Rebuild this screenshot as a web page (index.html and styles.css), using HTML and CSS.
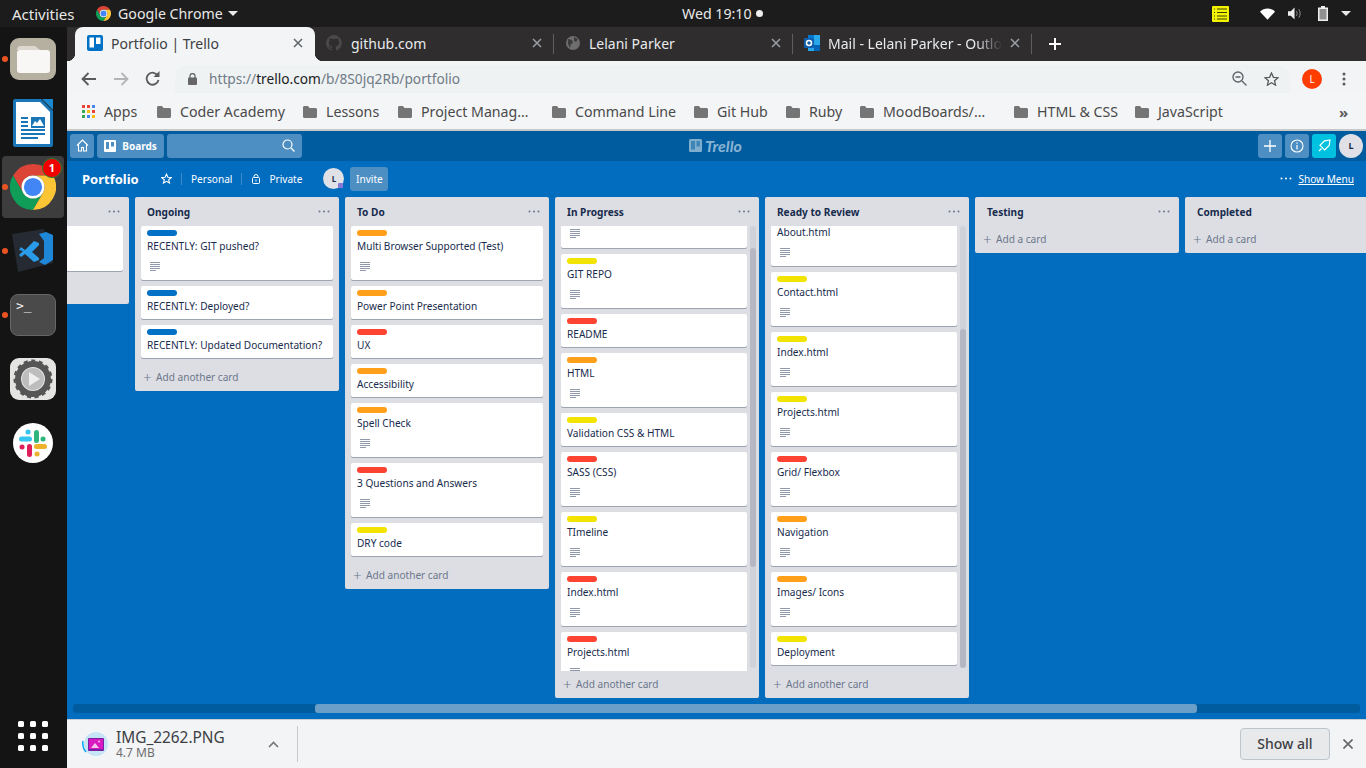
FILE: index.html
```html
<!DOCTYPE html>
<html>
  <head>
    <title>Portfolio | Trello</title>
    <link rel="stylesheet" href="styles.css">
  </head>
  <body>
    <svg class="defs" width="0" height="0">
      <symbol id="desc" viewBox="0 0 10 9"><path d="M0 .5h10M0 2.5h10M0 4.5h10M0 6.5h10M0 8.5h6" stroke="#6b778c" stroke-opacity=".75" fill="none"/></symbol>
      <symbol id="folder" viewBox="0 0 14 12"><path d="M0 1.5C0 .6.600 0 1.5 0H5l1.5 2h6c.9 0 1.5.6 1.5 1.5v7c0 .9-.6 1.5-1.5 1.5h-11C.6 12 0 11.4 0 10.5z" fill="#757575"/></symbol>
      <symbol id="dots" viewBox="0 0 12 3"><circle cx="1.5" cy="1.5" r="1"/><circle cx="6" cy="1.5" r="1"/><circle cx="10.5" cy="1.5" r="1"/></symbol>
      <symbol id="chrome" viewBox="0 0 48 48">
        <path d="M24 0A24 24 0 0 1 44.800 12H24A12 12 0 0 0 13.600 30L3.200 12A24 24 0 0 1 24 0z" fill="#db4437"/>
        <path d="M3.200 12L13.600 30A12 12 0 0 0 34.400 30L24 48A24 24 0 0 1 3.200 12z" fill="#0f9d58"/>
        <path d="M44.800 12A24 24 0 0 1 24 48L34.400 30A12 12 0 0 0 24 12z" fill="#fbc535"/>
        <circle cx="24" cy="24" r="12" fill="#fff"/>
        <circle cx="24" cy="24" r="9.500" fill="#4285f4"/>
      </symbol>
    </svg>

    <div class="topbar">
      <span class="activities">Activities</span>
      <span class="top-app"><svg class="top-logo" width="15" height="15"><use href="#chrome"/></svg>Google Chrome<i class="caret"></i></span>
      <span class="clock">Wed 19:10<i class="clock-dot"></i></span>
      <span class="tray">
        <svg class="tray-note" width="17" height="16" viewBox="0 0 17 16"><rect width="17" height="16" rx="1" fill="#f4f400"/><path d="M2 3h1M5 3h10M2 6.5h1M5 6.5h10M2 10h1M5 10h10M2 13h1M5 13h10" stroke="#3c3c00"/></svg>
        <svg class="tray-wifi" width="15" height="12" viewBox="0 0 16 12"><path d="M0 3.5C4.500-1 11.500-1 16 3.5L8 12z" fill="#fff"/></svg>
        <svg class="tray-sound" width="14" height="13" viewBox="0 0 15 13"><path d="M0 4h3l4-4v13l-4-4H0z" fill="#eee"/><path d="M9 4c1 1.500 1 3.500 0 5M11.500 2c2 2.500 2 6.500 0 9" stroke="#999" fill="none"/></svg>
        <svg class="tray-battery" width="10" height="15" viewBox="0 0 10 15"><path d="M3 0h4v1.500h3V15H0V1.500h3z" fill="#eee"/><rect x="1.5" y="3" width="7" height="10.500" fill="#1c1c1c" opacity=".45"/></svg>
        <i class="caret"></i>
      </span>
    </div>

    <div class="desktop">
      <div class="dock">
        <div class="dock-item running">
          <svg width="46" height="42" viewBox="0 0 46 42"><rect width="46" height="42" rx="9" fill="#b6b0a1"/><path d="M7 13c0-3 1-5 4-5h14l5 4H7z" fill="#dcd8cf"/><rect x="7" y="12" width="33" height="23" rx="3" fill="#f8f7f5"/></svg>
        </div>
        <div class="dock-item">
          <svg width="40" height="48" viewBox="0 0 40 48"><path d="M2 0h26l12 12v34c0 1-1 2-2 2H2c-1 0-2-1-2-2V2C0 1 1 0 2 0z" fill="#1b76b8"/><path d="M3 3h24l10 10v32H3z" fill="#fff"/><path d="M29 0l11 0v11z" fill="#1b87cf"/><path d="M8 19h7M8 23h7M8 27h7M8 31h24M8 35h24M8 39h17" stroke="#1b76b8" stroke-width="2"/><rect x="18" y="18" width="14" height="11" fill="#1b76b8"/><path d="M19 27l3-5 2 2 3-4 4 7z" fill="#fff"/></svg>
        </div>
        <div class="dock-item running active">
          <svg class="dock-chrome" width="46" height="46"><use href="#chrome"/></svg>
          <span class="badge">1</span>
        </div>
        <div class="dock-item running">
          <svg width="42" height="44" viewBox="0 0 42 44"><path d="M0 5l32-5 9 34-35 9z" fill="#252a33"/><path d="M27 5l7-2 7 3-0 25-8 5-6-3 5-4V12z" fill="#1f87d8"/><path d="M7 21l2-3 4 3 9-9 5 2v2l-7 7 7 6v2l-5 2-9-8-4 3-2-2 4-4z" fill="#2a9be8"/></svg>
        </div>
        <div class="dock-item running">
          <div class="term-icon">&gt;_</div>
        </div>
        <div class="dock-item">
          <svg width="46" height="42" viewBox="0 0 46 42"><rect width="46" height="42" rx="9" fill="#e4e4e2"/><circle cx="23" cy="21" r="15" fill="none" stroke="#555" stroke-width="6"/><circle cx="23" cy="21" r="18" fill="none" stroke="#555" stroke-width="3" stroke-dasharray="4 3.500"/><circle cx="23" cy="21" r="11" fill="#bdbdbd"/><path d="M19 14l11 7-11 7z" fill="#eee"/></svg>
        </div>
        <div class="dock-item">
          <svg width="40" height="40" viewBox="0 0 40 40"><circle cx="20" cy="20" r="20" fill="#fff"/><g fill="none" stroke-width="5" stroke-linecap="round"><path d="M8.500 16h8M15 9h.1" stroke="#36c5f0"/><path d="M23.500 9.500v8M30 16h.1" stroke="#2eb67d"/><path d="M23.500 23.500h8M24 31h.1" stroke="#ecb22e"/><path d="M16.500 23.500v8M9 24h.1" stroke="#e01e5a"/></g></svg>
        </div>
        <div class="dock-item apps-grid">
          <svg width="30" height="30" viewBox="0 0 30 30" fill="#fff"><rect width="6" height="6" rx="1.500"/><rect x="12" width="6" height="6" rx="1.500"/><rect x="24" width="6" height="6" rx="1.500"/><rect y="12" width="6" height="6" rx="1.500"/><rect x="12" y="12" width="6" height="6" rx="1.500"/><rect x="24" y="12" width="6" height="6" rx="1.500"/><rect y="24" width="6" height="6" rx="1.500"/><rect x="12" y="24" width="6" height="6" rx="1.500"/><rect x="24" y="24" width="6" height="6" rx="1.500"/></svg>
        </div>
      </div>

      <div class="chrome">
        <div class="tabs">
          <div class="tab current">
            <svg class="favicon" width="16" height="16" viewBox="0 0 16 16"><rect width="16" height="16" rx="2" fill="#0072c6"/><rect x="2.5" y="2.5" width="4.500" height="10" rx=".5" fill="#fff"/><rect x="9" y="2.5" width="4.500" height="6.500" rx=".5" fill="#fff"/></svg>
            <span class="tab-title">Portfolio | Trello</span>
            <svg class="tab-close" width="10" height="10" viewBox="0 0 10 10"><path d="M1 1l8 8M9 1l-8 8" stroke="#5f6368" stroke-width="1.500"/></svg>
          </div>
          <div class="tab">
            <svg class="favicon" width="16" height="16" viewBox="0 0 16 16"><path d="M8 0a8 8 0 0 0-2.500 15.600c.4.100.5-.2.500-.4v-1.400c-2.200.5-2.700-1-2.700-1-.4-.9-.9-1.200-.9-1.200-.7-.5.100-.5.100-.5.800.1 1.200.8 1.200.8.700 1.200 1.900.9 2.300.7.100-.5.300-.9.500-1.100-1.800-.2-3.600-.9-3.600-4 0-.9.300-1.600.8-2.100-.1-.2-.4-1 .1-2.100 0 0 .7-.2 2.200.8a7.600 7.600 0 0 1 4 0c1.500-1 2.200-.8 2.200-.8.400 1.100.2 1.900.1 2.100.5.600.8 1.300.8 2.100 0 3.100-1.900 3.700-3.700 3.900.3.300.6.800.6 1.500v2.200c0 .2.100.5.600.4A8 8 0 0 0 8 0z" fill="#4a4a4a"/></svg>
            <span class="tab-title">github.com</span>
            <svg class="tab-close" width="10" height="10" viewBox="0 0 10 10"><path d="M1 1l8 8M9 1l-8 8" stroke="#9aa0a6" stroke-width="1.500"/></svg>
          </div>
          <i class="tab-sep"></i>
          <div class="tab">
            <svg class="favicon" width="16" height="16" viewBox="0 0 16 16"><circle cx="8" cy="8" r="7" fill="#6e6e6e"/><path d="M3 4l4 1 1 3-2 1-1 4-2-4zM9 2l4 2-2 3-2-1z" fill="#3c3c3c"/></svg>
            <span class="tab-title">Lelani Parker</span>
            <svg class="tab-close" width="10" height="10" viewBox="0 0 10 10"><path d="M1 1l8 8M9 1l-8 8" stroke="#9aa0a6" stroke-width="1.500"/></svg>
          </div>
          <i class="tab-sep"></i>
          <div class="tab">
            <svg class="favicon" width="16" height="16" viewBox="0 0 16 16"><rect x="4" width="12" height="16" fill="#28a8ea"/><rect x="4" width="6" height="5" fill="#0078d4"/><rect x="10" y="10" width="6" height="6" fill="#0364b8"/><rect y="3" width="10" height="10" rx="1" fill="#0f5fb0"/><circle cx="5" cy="8" r="2.500" fill="none" stroke="#fff" stroke-width="1.500"/></svg>
            <span class="tab-title faded">Mail - Lelani Parker - Outlo</span>
            <svg class="tab-close" width="10" height="10" viewBox="0 0 10 10"><path d="M1 1l8 8M9 1l-8 8" stroke="#9aa0a6" stroke-width="1.500"/></svg>
          </div>
          <i class="tab-sep"></i>
          <svg class="new-tab" width="12" height="12" viewBox="0 0 12 12"><path d="M6 0v12M0 6h12" stroke="#fff" stroke-width="2"/></svg>
        </div>

        <div class="toolbar">
          <svg class="nav-btn" width="16" height="14" viewBox="0 0 16 14"><path d="M15 7H2M7.500 1L1.500 7l6 6" fill="none" stroke="#5a5a5a" stroke-width="1.800"/></svg>
          <svg class="nav-btn" width="16" height="14" viewBox="0 0 16 14"><path d="M1 7h13M8.500 1l6 6-6 6" fill="none" stroke="#b4b4b4" stroke-width="1.800"/></svg>
          <svg class="nav-btn" width="15" height="15" viewBox="0 0 15 15"><path d="M13 5A6 6 0 1 0 13.500 9" fill="none" stroke="#5a5a5a" stroke-width="1.800"/><path d="M14.500 0v6h-6z" fill="#5a5a5a"/></svg>
          <div class="omnibox">
            <svg width="9" height="12" viewBox="0 0 9 12"><rect y="4.500" width="9" height="7.500" rx="1" fill="#666"/><path d="M2 5V3a2.500 2.500 0 0 1 5 0v2" fill="none" stroke="#666" stroke-width="1.300"/></svg>
            <span class="url"><span class="url-dim">https://</span>trello.com<span class="url-dim">/b/8S0jq2Rb/portfolio</span></span>
            <svg class="zoom-out" width="15" height="15" viewBox="0 0 15 15"><circle cx="6" cy="6" r="5" fill="none" stroke="#5f6368" stroke-width="1.400"/><path d="M3.500 6h5M10 10l4.500 4.500" stroke="#5f6368" stroke-width="1.400"/></svg>
            <svg class="star-btn" width="15" height="14" viewBox="0 0 15 14"><path d="M7.500 1l1.900 4.300 4.600.4-3.500 3 1.100 4.500-4.100-2.400-4.100 2.400 1.100-4.500L1 5.700l4.600-.4z" fill="none" stroke="#5a5a5a" stroke-width="1.300"/></svg>
          </div>
          <span class="profile">L</span>
          <svg class="more-btn" width="4" height="14" viewBox="0 0 4 14" fill="#5a5a5a"><circle cx="2" cy="2" r="1.500"/><circle cx="2" cy="7" r="1.500"/><circle cx="2" cy="12" r="1.500"/></svg>
        </div>

        <div class="bookmarks">
          <span class="bm bm-apps">
            <svg width="13" height="13" viewBox="0 0 13 13"><rect width="3" height="3" fill="#ea4335"/><rect x="5" width="3" height="3" fill="#ea4335"/><rect x="10" width="3" height="3" fill="#4285f4"/><rect y="5" width="3" height="3" fill="#34a853"/><rect x="5" y="5" width="3" height="3" fill="#fbbc05"/><rect x="10" y="5" width="3" height="3" fill="#ea4335"/><rect y="10" width="3" height="3" fill="#34a853"/><rect x="5" y="10" width="3" height="3" fill="#4285f4"/><rect x="10" y="10" width="3" height="3" fill="#fbbc05"/></svg>
            Apps
          </span>
          <span class="bm bm-coder"><svg width="14" height="12"><use href="#folder"/></svg>Coder Academy</span>
          <span class="bm bm-lessons"><svg width="14" height="12"><use href="#folder"/></svg>Lessons</span>
          <span class="bm bm-project"><svg width="14" height="12"><use href="#folder"/></svg>Project Manag&#8230;</span>
          <span class="bm bm-command"><svg width="14" height="12"><use href="#folder"/></svg>Command Line</span>
          <span class="bm bm-git"><svg width="14" height="12"><use href="#folder"/></svg>Git Hub</span>
          <span class="bm bm-ruby"><svg width="14" height="12"><use href="#folder"/></svg>Ruby</span>
          <span class="bm bm-mood"><svg width="14" height="12"><use href="#folder"/></svg>MoodBoards/&#8230;</span>
          <span class="bm bm-html"><svg width="14" height="12"><use href="#folder"/></svg>HTML &amp; CSS</span>
          <span class="bm bm-js"><svg width="14" height="12"><use href="#folder"/></svg>JavaScript</span>
          <span class="bm-more">&#187;</span>
        </div>

        <div class="trello">
          <div class="t-header">
            <span class="t-btn t-home">
              <svg width="13" height="13" viewBox="0 0 13 13"><path d="M1 6.500L6.500 1 12 6.500M2.500 5.500V12h3V8.500h2V12h3V5.500" fill="none" stroke="#fff" stroke-width="1.100"/></svg>
            </span>
            <span class="t-btn t-boards">
              <svg width="12" height="12" viewBox="0 0 12 12"><rect width="12" height="12" rx="1" fill="#fff"/><rect x="2" y="2" width="3" height="7" fill="#4d8fc2"/><rect x="7" y="2" width="3" height="4.500" fill="#4d8fc2"/></svg>
              Boards
            </span>
            <span class="t-btn t-search">
              <svg width="13" height="13" viewBox="0 0 13 13"><circle cx="5.5" cy="5.5" r="4.500" fill="none" stroke="#fff" stroke-width="1.200"/><path d="M9 9l3.500 3.500" stroke="#fff" stroke-width="1.200"/></svg>
            </span>
            <span class="t-logo">
              <svg width="13" height="13" viewBox="0 0 13 13"><rect width="13" height="13" rx="1.500" fill="#fff" fill-opacity=".5"/><rect x="2" y="2" width="4" height="8.500" fill="#005c9f" fill-opacity=".5"/><rect x="7.5" y="2" width="3.500" height="5.500" fill="#005c9f" fill-opacity=".5"/></svg>
              Trello
            </span>
            <span class="t-btn t-square">
              <svg width="12" height="12" viewBox="0 0 12 12"><path d="M6 0v12M0 6h12" stroke="#fff" stroke-width="1.300"/></svg>
            </span>
            <span class="t-btn t-square">
              <svg width="14" height="14" viewBox="0 0 14 14"><circle cx="7" cy="7" r="6" fill="none" stroke="#fff" stroke-width="1.100"/><path d="M7 6v4.500M7 3.500v1.200" stroke="#fff" stroke-width="1.200"/></svg>
            </span>
            <span class="t-btn t-square t-rocket">
              <svg width="13" height="13" viewBox="0 0 13 13"><path d="M12 1L6.500 1.800 2 6.300l4.700 4.700L11.200 6.500zM3.500 9.500L1 12" fill="none" stroke="#fff" stroke-width="1.200"/></svg>
            </span>
            <span class="t-avatar">L</span>
          </div>

          <div class="b-header">
            <span class="b-title">Portfolio</span>
            <svg class="b-star" width="11" height="11" viewBox="0 0 15 14"><path d="M7.500 1l1.900 4.300 4.600.4-3.500 3 1.100 4.500-4.100-2.400-4.100 2.400 1.100-4.500L1 5.700l4.600-.4z" fill="none" stroke="#fff" stroke-width="1.500"/></svg>
            <i class="b-sep"></i>
            <span class="b-text">Personal</span>
            <i class="b-sep"></i>
            <svg class="b-lock" width="8" height="10" viewBox="0 0 8 10"><rect x=".5" y="3.500" width="7" height="6" rx="1" fill="none" stroke="#fff"/><path d="M2 3.500V2.500a2 2 0 0 1 4 0v1" fill="none" stroke="#fff"/><path d="M4 5.500v2" stroke="#fff"/></svg>
            <span class="b-text">Private</span>
            <span class="b-avatar">L<i class="b-avatar-mark"></i></span>
            <span class="b-invite">Invite</span>
            <svg class="b-dots" width="12" height="3" fill="#fff"><use href="#dots"/></svg>
            <span class="b-menu">Show Menu</span>
          </div>

          <div class="board">
            <div class="list">
              <div class="list-head"><h2></h2><svg width="12" height="3"><use href="#dots"/></svg></div>
              <div class="cards">
                <div class="card card-empty"></div>
              </div>
              <div class="list-foot"></div>
            </div>

            <div class="list">
              <div class="list-head"><h2>Ongoing</h2><svg width="12" height="3"><use href="#dots"/></svg></div>
              <div class="cards">
                <div class="card"><i class="label blue"></i><p>RECENTLY: GIT pushed?</p><svg class="desc" width="10" height="9"><use href="#desc"/></svg></div>
                <div class="card"><i class="label blue"></i><p>RECENTLY: Deployed?</p></div>
                <div class="card"><i class="label blue"></i><p>RECENTLY: Updated Documentation?</p></div>
              </div>
              <div class="list-foot"><span class="plus">+</span>Add another card</div>
            </div>

            <div class="list">
              <div class="list-head"><h2>To Do</h2><svg width="12" height="3"><use href="#dots"/></svg></div>
              <div class="cards">
                <div class="card"><i class="label orange"></i><p>Multi Browser Supported (Test)</p><svg class="desc" width="10" height="9"><use href="#desc"/></svg></div>
                <div class="card"><i class="label orange"></i><p>Power Point Presentation</p></div>
                <div class="card"><i class="label red"></i><p>UX</p></div>
                <div class="card"><i class="label orange"></i><p>Accessibility</p></div>
                <div class="card"><i class="label orange"></i><p>Spell Check</p><svg class="desc" width="10" height="9"><use href="#desc"/></svg></div>
                <div class="card"><i class="label red"></i><p>3 Questions and Answers</p><svg class="desc" width="10" height="9"><use href="#desc"/></svg></div>
                <div class="card"><i class="label yellow"></i><p>DRY code</p></div>
              </div>
              <div class="list-foot"><span class="plus">+</span>Add another card</div>
            </div>

            <div class="list">
              <div class="list-head"><h2>In Progress</h2><svg width="12" height="3"><use href="#dots"/></svg></div>
              <div class="scroller">
                <div class="cards scrolled">
                  <div class="card card-top"><svg class="desc" width="10" height="9"><use href="#desc"/></svg></div>
                  <div class="card"><i class="label yellow"></i><p>GIT REPO</p><svg class="desc" width="10" height="9"><use href="#desc"/></svg></div>
                  <div class="card"><i class="label red"></i><p>README</p></div>
                  <div class="card"><i class="label orange"></i><p>HTML</p><svg class="desc" width="10" height="9"><use href="#desc"/></svg></div>
                  <div class="card"><i class="label yellow"></i><p>Validation CSS &amp; HTML</p></div>
                  <div class="card"><i class="label red"></i><p>SASS (CSS)</p><svg class="desc" width="10" height="9"><use href="#desc"/></svg></div>
                  <div class="card"><i class="label yellow"></i><p>TImeline</p><svg class="desc" width="10" height="9"><use href="#desc"/></svg></div>
                  <div class="card"><i class="label red"></i><p>Index.html</p><svg class="desc" width="10" height="9"><use href="#desc"/></svg></div>
                  <div class="card"><i class="label red"></i><p>Projects.html</p><svg class="desc" width="10" height="9"><use href="#desc"/></svg></div>
                </div>
                <div class="scrollbar"><i class="thumb thumb-progress"></i></div>
              </div>
              <div class="list-foot"><span class="plus">+</span>Add another card</div>
            </div>

            <div class="list">
              <div class="list-head"><h2>Ready to Review</h2><svg width="12" height="3"><use href="#dots"/></svg></div>
              <div class="scroller">
                <div class="cards scrolled in-review">
                  <div class="card"><i class="label yellow"></i><p>About.html</p><svg class="desc" width="10" height="9"><use href="#desc"/></svg></div>
                  <div class="card"><i class="label yellow"></i><p>Contact.html</p><svg class="desc" width="10" height="9"><use href="#desc"/></svg></div>
                  <div class="card"><i class="label yellow"></i><p>Index.html</p><svg class="desc" width="10" height="9"><use href="#desc"/></svg></div>
                  <div class="card"><i class="label yellow"></i><p>Projects.html</p><svg class="desc" width="10" height="9"><use href="#desc"/></svg></div>
                  <div class="card"><i class="label red"></i><p>Grid/ Flexbox</p><svg class="desc" width="10" height="9"><use href="#desc"/></svg></div>
                  <div class="card"><i class="label orange"></i><p>Navigation</p><svg class="desc" width="10" height="9"><use href="#desc"/></svg></div>
                  <div class="card"><i class="label orange"></i><p>Images/ Icons</p><svg class="desc" width="10" height="9"><use href="#desc"/></svg></div>
                  <div class="card"><i class="label yellow"></i><p>Deployment</p></div>
                </div>
                <div class="scrollbar"><i class="thumb thumb-review"></i></div>
              </div>
              <div class="list-foot"><span class="plus">+</span>Add another card</div>
            </div>

            <div class="list">
              <div class="list-head"><h2>Testing</h2><svg width="12" height="3"><use href="#dots"/></svg></div>
              <div class="list-foot short"><span class="plus">+</span>Add a card</div>
            </div>

            <div class="list">
              <div class="list-head"><h2>Completed</h2></div>
              <div class="list-foot short"><span class="plus">+</span>Add a card</div>
            </div>
          </div>

          <div class="board-scroll"><i class="board-thumb"></i></div>
        </div>

        <div class="downloads">
          <svg class="dl-icon" width="26" height="26" viewBox="0 0 26 26"><circle cx="14" cy="13" r="12" fill="#c5e5f7"/><path d="M1 10a13 13 0 0 0 3 11" fill="none" stroke="#03a9f4" stroke-width="1.500"/><rect x="6" y="7" width="16" height="13" rx="1" fill="#7b1fa2"/><rect x="7" y="8" width="14" height="10" fill="#d81bc0"/><path d="M9 17l4-5 4 5z" fill="#f6c6ee"/><circle cx="17" cy="10.500" r="1" fill="#f6c6ee"/></svg>
          <span class="dl-info">
            <span class="dl-name">IMG_2262.PNG</span>
            <span class="dl-size">4.7 MB</span>
          </span>
          <svg class="dl-chevron" width="11" height="7" viewBox="0 0 11 7"><path d="M1 6l4.500-4.500L10 6" fill="none" stroke="#757575" stroke-width="1.600"/></svg>
          <i class="dl-sep"></i>
          <span class="dl-all">Show all</span>
          <svg class="dl-close" width="10" height="10" viewBox="0 0 10 10"><path d="M.5.5l9 9M9.500.5l-9 9" stroke="#666" stroke-width="1.600"/></svg>
        </div>
      </div>
    </div>
  </body>
</html>
```

FILE: styles.css
```css
* {
  box-sizing: border-box;
}

html, body {
  margin: 0;
  height: 768px;
  overflow: hidden;
}

body {
  font-family: "Noto Sans", "Open Sans", sans-serif;
  color: #172b4d;
  background: #141414;
}

i {
  display: block;
}

.defs {
  position: absolute;
}

/* ubuntu top bar */
.topbar {
  height: 27px;
  background: #1c1c1c;
  color: #e8e8e8;
  font-size: 14.2px;
  display: flex;
  align-items: center;
  position: relative;
}

.activities {
  margin-left: 12px;
  width: 84px;
  font-size: 15px;
}

.top-app {
  display: flex;
  align-items: center;
}

.top-logo {
  margin-right: 7px;
}

.caret {
  width: 0;
  height: 0;
  border-left: 5px solid transparent;
  border-right: 5px solid transparent;
  border-top: 5px solid #e8e8e8;
  margin-left: 5px;
  box-sizing: content-box;
}

.clock {
  position: absolute;
  left: 682px;
  display: flex;
  align-items: center;
}

.clock-dot {
  width: 7px;
  height: 7px;
  border-radius: 50%;
  background: #eee;
  margin-left: 4px;
}

.tray {
  margin-left: auto;
  display: flex;
  align-items: center;
  padding-right: 15px;
}

.tray-note {
  margin-right: 31px;
}

.tray-wifi {
  margin-right: 13px;
}

.tray-sound {
  margin-right: 16px;
}

.tray-battery {
  margin-right: 8px;
}

/* dock */
.desktop {
  display: flex;
  height: 741px;
}

.dock {
  width: 67px;
  flex: none;
  background: #141414;
  display: flex;
  flex-direction: column;
}

.dock-item {
  height: 64px;
  display: flex;
  align-items: center;
  justify-content: center;
  padding-right: 1px;
  position: relative;
}

.dock-item.running::before {
  content: "";
  position: absolute;
  left: 2px;
  top: 29px;
  width: 6px;
  height: 6px;
  border-radius: 50%;
  background: #e95420;
  z-index: 1;
}

.dock-item.active::after {
  content: "";
  position: absolute;
  left: 2px;
  top: 1px;
  width: 62px;
  height: 62px;
  border-radius: 4px;
  background: #3d3d3d;
}

.dock-chrome {
  position: relative;
  z-index: 1;
}

.badge {
  position: absolute;
  left: 42px;
  top: 3px;
  width: 20px;
  height: 20px;
  border-radius: 50%;
  background: #f00000;
  border: 1px solid #2e7d32;
  color: #fff;
  font-size: 11px;
  font-weight: 700;
  text-align: center;
  line-height: 18px;
  z-index: 2;
}

.term-icon {
  width: 46px;
  height: 42px;
  border-radius: 8px;
  background: #4a4a4a;
  border: 1px solid #666;
  color: #eee;
  font-family: "DejaVu Sans Mono", monospace;
  font-size: 13px;
  line-height: 16px;
  padding: 3px 5px;
}

.apps-grid {
  margin-top: auto;
}

/* chrome window */
.chrome {
  flex: 1;
  min-width: 0;
  display: flex;
  flex-direction: column;
}

.tabs {
  height: 34px;
  background: #2f2d2e;
  display: flex;
  align-items: center;
  padding-left: 8px;
  color: #e8eaed;
  font-size: 14px;
}

.tab {
  width: 238px;
  height: 34px;
  display: flex;
  align-items: center;
  padding: 0 11px 2px;
  flex: none;
}

.tab.current {
  width: 240px;
  background: #f3f4f6;
  color: #3c4043;
  border-radius: 8px 8px 0 0;
  padding-left: 12px;
  padding-right: 12px;
  position: relative;
}

.tab.current::before,
.tab.current::after {
  content: "";
  position: absolute;
  bottom: 0;
  width: 8px;
  height: 8px;
}

.tab.current::before {
  left: -8px;
  background: radial-gradient(circle at 0 0, transparent 8px, #f3f4f6 8.5px);
}

.tab.current::after {
  right: -8px;
  background: radial-gradient(circle at 100% 0, transparent 8px, #f3f4f6 8.5px);
}

.favicon {
  flex: none;
  margin-right: 9px;
}

.current .favicon,
.tab-sep + .tab .favicon {
  margin-right: 8px;
}

.tab-title {
  flex: 1;
  white-space: nowrap;
  overflow: hidden;
}

.tab-title.faded {
  -webkit-mask-image: linear-gradient(to right, #000 85%, transparent);
  mask-image: linear-gradient(to right, #000 85%, transparent);
}

.tab-close {
  margin-left: 8px;
  flex: none;
}

.tab-sep {
  width: 1px;
  height: 20px;
  background: #5f5f5f;
  flex: none;
}

.new-tab {
  margin-left: 17px;
}

.toolbar {
  height: 32px;
  background: #f3f4f6;
  display: flex;
  align-items: flex-end;
  padding-left: 14px;
}

.nav-btn {
  margin-right: 16px;
  align-self: center;
  margin-top: 4px;
  flex: none;
}

.omnibox {
  width: 1115px;
  height: 28px;
  flex: none;
  margin-left: -1px;
  background: #eff2f3;
  border-radius: 14px 14px 0 0;
  display: flex;
  align-items: center;
  padding: 0 11px 0 13px;
  font-size: 13.7px;
}

.url {
  margin-left: 12px;
  color: #202124;
}

.url-dim {
  color: #6f7b86;
}

.zoom-out {
  margin-left: auto;
  margin-right: 17px;
}

.profile {
  width: 20px;
  height: 20px;
  flex: none;
  border-radius: 50%;
  background: #ff3d00;
  color: #fff;
  font-size: 10px;
  text-align: center;
  line-height: 20px;
  margin-left: 12px;
  align-self: center;
  margin-top: 4px;
}

.more-btn {
  margin-left: 20px;
  align-self: center;
  margin-top: 4px;
  flex: none;
}

.bookmarks {
  height: 38px;
  background: #f4f5f7;
  border-bottom: 2px solid #c8c8c8;
  display: flex;
  align-items: center;
  font-size: 14.2px;
  color: #4a4a4a;
  padding: 2px 0 0 15px;
  white-space: nowrap;
}

.bm {
  display: flex;
  align-items: center;
  flex: none;
}

.bm svg {
  margin-right: 9px;
}

.bm-apps { width: 75px; }
.bm-coder { width: 146px; }
.bm-lessons { width: 95px; }
.bm-project { width: 154px; }
.bm-command { width: 142px; }
.bm-git { width: 92px; }
.bm-ruby { width: 74px; }
.bm-mood { width: 154px; }
.bm-html { width: 121px; }
.bm-js { width: 204px; }

.bm-more {
  font-size: 15px;
  font-weight: 700;
  color: #5a5a5a;
}

/* trello */
.trello {
  height: 589px;
  background: #026cbf;
  display: flex;
  flex-direction: column;
  overflow: hidden;
}

.t-header {
  height: 30px;
  flex: none;
  background: #005c9f;
  display: flex;
  align-items: center;
  gap: 3px;
  padding: 0 3px;
  position: relative;
  color: #fff;
}

.t-btn {
  height: 24px;
  border-radius: 3px;
  background: #4d8fc2;
  display: flex;
  align-items: center;
  justify-content: center;
  flex: none;
}

.t-home,
.t-square {
  width: 24px;
}

.t-boards {
  width: 67px;
  font-size: 10px;
  font-weight: 700;
  gap: 6px;
}

.t-search {
  width: 135px;
  justify-content: flex-end;
  padding-right: 7px;
}

.t-logo {
  position: absolute;
  left: 622px;
  top: 8px;
  display: flex;
  align-items: center;
  gap: 3px;
  font-family: "Lato", sans-serif;
  font-style: italic;
  font-weight: 700;
  font-size: 16px;
  line-height: 14px;
  color: rgba(255, 255, 255, 0.55);
}

.t-logo + .t-square {
  margin-left: auto;
}

.t-rocket {
  background: #00c2e0;
}

.t-avatar {
  width: 24px;
  height: 24px;
  border-radius: 50%;
  background: #dfe1e6;
  color: #172b4d;
  font-size: 9px;
  font-weight: 700;
  text-align: center;
  line-height: 24px;
}

.b-header {
  height: 36px;
  flex: none;
  display: flex;
  align-items: center;
  color: #fff;
  font-size: 10.1px;
  padding: 0 12px 0 15px;
}

.b-title {
  font-size: 13px;
  font-weight: 700;
  width: 79px;
}

.b-sep {
  width: 1px;
  height: 12px;
  background: #3d8cc9;
}

.b-star {
  margin-right: 9px;
}

.b-sep + .b-text {
  margin-left: 9px;
  margin-right: 9px;
}

.b-lock {
  margin-left: 10px;
  margin-right: 9px;
}

.b-avatar {
  width: 21px;
  height: 21px;
  border-radius: 50%;
  background: #dfe1e6;
  color: #172b4d;
  font-size: 8px;
  font-weight: 700;
  text-align: center;
  line-height: 21px;
  margin-left: 21px;
  position: relative;
}

.b-avatar-mark {
  position: absolute;
  right: 1px;
  bottom: 1px;
  width: 5px;
  height: 5px;
  background: #8777d9;
  border-radius: 1px;
}

.b-invite {
  width: 38px;
  height: 24px;
  margin-left: 6px;
  border-radius: 3px;
  background: #4d8fc2;
  text-align: center;
  line-height: 24px;
}

.b-dots {
  margin-left: auto;
  margin-right: 6px;
}

.b-menu {
  text-decoration: underline;
}

.board {
  flex: 1;
  min-height: 0;
  display: flex;
  align-items: flex-start;
  gap: 6px;
  margin-left: -142px;
}

.list {
  width: 204px;
  flex: none;
  background: #dddee3;
  border-radius: 2px;
  display: flex;
  flex-direction: column;
}

.list-head {
  height: 29px;
  flex: none;
  display: flex;
  align-items: center;
  justify-content: space-between;
  padding: 1px 9px 0 12px;
  fill: #6b778c;
}

.list-head h2 {
  margin: 0;
  font-size: 10.1px;
  font-weight: 700;
  color: #172b4d;
}

.cards {
  display: flex;
  flex-direction: column;
  gap: 6px;
  padding: 0 6px;
}

.card {
  flex: none;
  min-height: 33px;
  background: #fff;
  border-radius: 2px;
  box-shadow: 0 1px 0 rgba(9, 30, 66, 0.3);
  padding: 4px 6px 0;
  font-size: 10.1px;
  white-space: nowrap;
}

.card p {
  margin: 3px 0 0;
  line-height: 14px;
  padding-bottom: 6px;
}

.card-empty {
  height: 45px;
}

.card-top {
  min-height: 22px;
  padding-top: 0;
  border-radius: 0 0 2px 2px;
}

.label {
  width: 30px;
  height: 6px;
  border-radius: 3px;
}

.blue { background: #0270c4; }
.orange { background: #ff9f1a; }
.red { background: #fd4433; }
.yellow { background: #f2e400; }

.desc {
  display: block;
  margin: 3px 0 9px 3px;
}

.list-foot {
  height: 33px;
  flex: none;
  display: flex;
  align-items: center;
  padding: 6px 0 0 8px;
  color: #6b778c;
  font-size: 10.1px;
}

.list-foot.short,
.scroller + .list-foot {
  height: 27px;
  padding-top: 0;
  padding-bottom: 1px;
}

.plus {
  font-size: 15px;
  font-weight: 300;
  line-height: 14px;
  margin-right: 3px;
  width: 10px;
}

.scroller {
  height: 445px;
  overflow: hidden;
  display: flex;
  position: relative;
}

.scrolled {
  width: 198px;
  flex: none;
  padding-right: 6px;
}

.in-review {
  margin-top: -14px;
}

.scrollbar {
  position: absolute;
  left: 195px;
  top: 0;
  bottom: 3px;
  width: 6px;
  background: #d0d2d9;
  border-radius: 3px;
}

.thumb {
  width: 6px;
  background: #b5b8c3;
  border-radius: 3px;
  position: absolute;
}

.thumb-progress {
  top: 22px;
  height: 319px;
}

.thumb-review {
  top: 103px;
  height: 339px;
}

.board-scroll {
  height: 9px;
  flex: none;
  background: #005c9f;
  border-radius: 3px;
  margin: 0 6px 6px;
  position: relative;
}

.board-thumb {
  position: absolute;
  left: 242px;
  width: 882px;
  top: 0;
  bottom: 0;
  background: #6a9fc9;
  border-radius: 3px;
}

/* downloads bar */
.downloads {
  height: 49px;
  flex: none;
  background: #f3f4f6;
  border-top: 1px solid #c8ced4;
  display: flex;
  align-items: center;
  padding-left: 15px;
  color: #3c4043;
}

.dl-icon {
  flex: none;
}

.dl-info {
  display: flex;
  flex-direction: column;
  margin-left: 8px;
  width: 152px;
  line-height: 14px;
}

.dl-name {
  font-size: 15.4px;
  line-height: 17px;
}

.dl-size {
  font-size: 12px;
  color: #6d6d6d;
}

.dl-sep {
  width: 1px;
  height: 36px;
  background: #c8c8c8;
  margin-left: 18px;
}

.dl-all {
  margin-left: auto;
  width: 90px;
  height: 32px;
  background: #e8e9eb;
  border: 1px solid #bcc4cc;
  border-radius: 4px;
  text-align: center;
  line-height: 30px;
  font-size: 14px;
  font-weight: 500;
  color: #3c4043;
}

.dl-close {
  margin: 0 13px;
}
```
